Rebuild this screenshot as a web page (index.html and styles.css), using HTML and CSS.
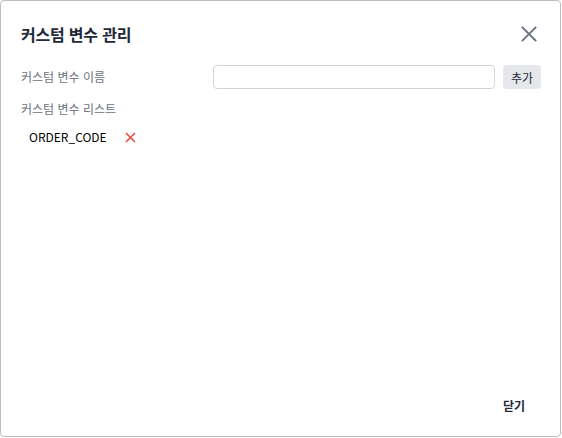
FILE: index.html
```html
<!DOCTYPE html>
<html lang="ko">
<head>
<meta charset="utf-8">
<link rel="stylesheet" href="styles.css">
</head>
<body>
<div class="dialog">
  <div class="header">
    <h2 class="title">커스텀 변수 관리</h2>
    <button class="close" aria-label="닫기">
      <svg width="16" height="16" viewBox="0 0 16 16"><path d="M1.5 1.5 L14.5 14.5 M14.5 1.5 L1.5 14.5" stroke="#6b7280" stroke-width="1.8" fill="none" stroke-linecap="square"/></svg>
    </button>
  </div>
  <div class="form-row">
    <label class="label name-label">커스텀 변수 이름</label>
    <input class="input" type="text">
    <button class="add">추가</button>
  </div>
  <div class="label list-label">커스텀 변수 리스트</div>
  <ul class="list">
    <li class="item">
      <span class="item-name">ORDER_CODE</span>
      <svg class="remove" width="11" height="11" viewBox="0 0 11 11"><path d="M1 1 L10 10 M10 1 L1 10" stroke="#ef4444" stroke-width="1.5" fill="none"/></svg>
    </li>
  </ul>
  <div class="footer">
    <button class="close-btn">닫기</button>
  </div>
</div>
</body>
</html>
```
FILE: styles.css
```css
html, body {
  margin: 0;
  padding: 0;
  background: #ffffff;
}
body {
  font-family: "Noto Sans CJK KR", "Noto Sans", sans-serif;
  color: #111827;
}
.dialog {
  width: 561px;
  height: 437px;
  box-sizing: border-box;
  border: 1px solid #bdbdbd;
  border-radius: 4px;
  padding: 20px 19px 18px 20px;
  display: flex;
  flex-direction: column;
  background: #fff;
}
.header {
  display: flex;
  justify-content: space-between;
  align-items: center;
  height: 26px;
}
.title {
  margin: 0;
  font-size: 16px;
  font-weight: 700;
  color: #1f2937;
  line-height: 26px;
  letter-spacing: -0.2px;
}
.close {
  border: none;
  background: none;
  padding: 0;
  margin-right: 4px;
  width: 16px;
  height: 16px;
  display: flex;
}
.form-row {
  display: flex;
  align-items: center;
  margin-top: 18px;
  height: 24px;
}
.label {
  font-size: 12px;
  color: #6b7280;
  line-height: 20px;
}
.name-label {
  width: 192px;
  flex: none;
}
.input {
  flex: 1;
  height: 24px;
  box-sizing: border-box;
  border: 1px solid #d1d5db;
  border-radius: 4px;
  margin: 0;
  padding: 0 8px;
}
.add {
  margin-left: 8px;
  width: 38px;
  height: 24px;
  border: none;
  border-radius: 4px;
  background: #e5e7eb;
  font-family: inherit;
  font-size: 12px;
  color: #1f2937;
  padding: 0;
}
.list-label {
  margin-top: 10px;
}
.list {
  list-style: none;
  margin: 8px 0 0 0;
  padding: 0 0 0 8px;
}
.item {
  display: flex;
  align-items: center;
  gap: 18px;
  font-size: 12px;
  line-height: 20px;
  color: #000;
}
.footer {
  margin-top: auto;
  display: flex;
  justify-content: flex-end;
}
.close-btn {
  border: none;
  background: none;
  font-family: inherit;
  font-size: 12px;
  font-weight: 700;
  color: #1f2937;
  padding: 4px 16px;
}
```
